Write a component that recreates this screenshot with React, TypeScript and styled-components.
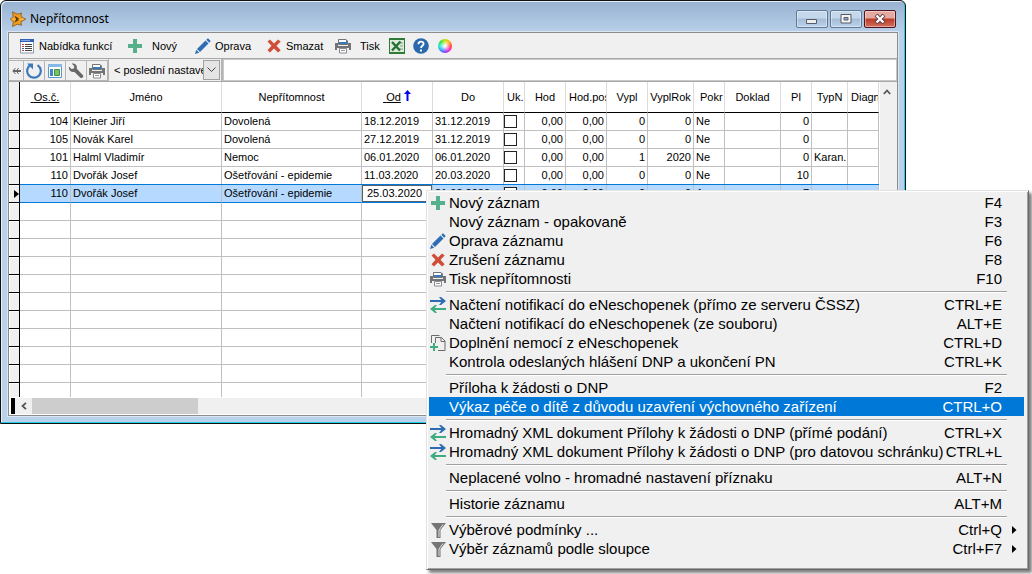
import React from "react";
import styled, { createGlobalStyle, css } from "styled-components";

const GlobalStyle = createGlobalStyle`
  * { box-sizing: border-box; }
  html, body { margin: 0; background: #fff; overflow: hidden; }
  button, input, select { font: inherit; color: inherit; border-radius: 0; margin: 0; }
`;

const Desktop = styled.main`
  position: relative;
  min-height: 100vh;
  color: #000;
`;

const Window = styled.section`
  position: absolute;
  top: 0;
  left: 0;
  right: 126px;
  padding: 0 7px 7px 7px;
  border: 1px solid #111;
  border-radius: 6px 6px 0 0;
  background: linear-gradient(#97b1d0, #b9d1ea 32px);
  box-shadow: inset -1px -1px 0 #1fd0ea, inset 1px 1px 0 #e3eefa;
  font: 11px/16px "Liberation Sans", sans-serif;
`;

const TitleBar = styled.header`
  display: flex;
  align-items: center;
  height: 31px;
  padding: 5px 2px 0 2px;
`;

const Title = styled.h1`
  flex: 1;
  margin: 0 0 0 4px;
  font: 12px/16px "Noto Sans", "Open Sans", sans-serif;
`;

const WindowButtons = styled.div`
  display: flex;
  gap: 2px;
`;

const WindowButton = styled.button<{ $close?: boolean }>`
  display: grid;
  place-items: center;
  width: 32px;
  height: 18px;
  padding: 0;
  border: 1px solid ${(p) => (p.$close ? "#4a1420" : "#5f7894")};
  border-radius: 2px;
  background: ${(p) =>
    p.$close
      ? "linear-gradient(#e6a99f 0 7px, #bb3a26 8px, #d2705c)"
      : "linear-gradient(#c4d7eb 0 7px, #a5bdd7 8px, #bcd2ea)"};
  box-shadow: inset 0 0 0 1px rgba(255, 255, 255, 0.4);
`;

const Frame = styled.div`
  border: 1px solid #8c8c8c;
  box-shadow: 0 0 0 1px #dbe6f2;
  background: #fff;
`;

const Toolbar = styled.div`
  display: flex;
  align-items: center;
  height: 25px;
  padding-left: 10px;
  background: #f0f0f0;
`;

const ToolButton = styled.button<{ $width: number; $gap?: number }>`
  display: flex;
  align-items: center;
  gap: ${(p) => p.$gap ?? 4}px;
  width: ${(p) => p.$width}px;
  padding: 0;
  border: 0;
  background: none;
  white-space: nowrap;
`;

const FilterBar = styled.div`
  display: flex;
  align-items: stretch;
  height: 24px;
  border-top: 1px solid #a8a8a8;
  border-bottom: 1px solid #a8a8a8;
  background: #f0f0f0;
`;

const SquareButton = styled.button<{ $slim?: boolean }>`
  display: grid;
  place-items: center;
  width: ${(p) => (p.$slim ? 15 : 21)}px;
  margin-top: 1px;
  padding: 0;
  border: solid #b4b4b4;
  border-width: 1px 1px 1px 0;
  background: #f0f0f0;
`;

const Combo = styled.div`
  position: relative;
  width: 115px;
  border: solid #b4b4b4;
  border-width: 0 2px 0 1px;
`;

const ComboSelect = styled.select`
  appearance: none;
  width: 100%;
  height: 100%;
  padding: 0 18px 0 5px;
  border: 0;
  background: #f0f0f0;
`;

const ComboArrow = styled.span`
  position: absolute;
  top: 1px;
  right: 1px;
  bottom: 1px;
  display: grid;
  place-items: center;
  width: 17px;
  border: 1px solid #a0a0a0;
  background: #e4e4e4;
  pointer-events: none;
`;

const FilterInput = styled.input`
  flex: 1;
  min-width: 0;
  border: 1px solid #c8c8c8;
  background: #fff;
  outline: 0;
`;

const GridArea = styled.div`
  display: flex;
`;

const Table = styled.table`
  flex: 1;
  width: 0;
  table-layout: fixed;
  border-collapse: separate;
  border-spacing: 0;
`;

const HeadCell = styled.th<{ $left?: number; $dark?: boolean }>`
  height: 31px;
  padding: 0 0 0 ${(p) => p.$left ?? 0}px;
  border-right: 1px solid ${(p) => (p.$dark ? "#000" : "#dcdcdc")};
  border-bottom: 1px solid #000;
  background: ${(p) => (p.$dark ? "#f0f0f0" : "#fff")};
  font-weight: 400;
  text-align: ${(p) => (p.$left ? "left" : "center")};
  white-space: nowrap;
  overflow: hidden;
`;

const SortKey = styled.span`
  text-decoration: underline;
  white-space: pre;
`;

const Cell = styled.td<{ $right?: boolean }>`
  height: 18px;
  padding: 0 2px;
  border-right: 1px solid #c0c0c0;
  border-bottom: 1px solid #c0c0c0;
  line-height: 17px;
  text-align: ${(p) => (p.$right ? "right" : "left")};
  white-space: nowrap;
  overflow: hidden;
`;

const Marker = styled.td`
  height: 18px;
  padding: 0;
  border-right: 1px solid #000;
  border-bottom: 1px solid #000;
  background: #f0f0f0;
  box-shadow: inset 1px 1px 0 #fff;
  line-height: 0;
  text-align: right;
`;

const Row = styled.tr<{ $selected?: boolean; $last?: boolean }>`
  ${(p) =>
    p.$selected &&
    css`
      ${Cell} {
        background: #b5d9ff;
        border-bottom-color: #0078d7;
        box-shadow: 0 -1px 0 #0078d7;
      }
    `}
  ${(p) =>
    p.$last &&
    css`
      ${Cell}, ${Marker} {
        height: 14px;
        border-bottom: 0;
      }
    `}
`;

const CheckBox = styled.input`
  appearance: none;
  display: block;
  width: 13px;
  height: 13px;
  margin-left: -2px;
  border: 1px solid #222;
  background: #fff;
`;

const EditBox = styled.input`
  display: block;
  width: 70px;
  height: 17px;
  margin: 0 -2px;
  padding: 0 0 0 4px;
  border: 1px solid #55606c;
  outline: 1px solid #0078d7;
  background: #fff;
`;

const VerticalBar = styled.div`
  display: flex;
  justify-content: center;
  width: 18px;
  padding: 7px 3px 0 0;
  border-left: 1px solid #fff;
  background: #f0f0f0;
`;

const HorizontalBar = styled.div`
  display: flex;
  align-items: stretch;
  height: 18px;
  padding: 1px 1px 1px 2px;
  background: #fff;
`;

const Block = styled.div`
  width: 4px;
  background: #000;
`;

const Track = styled.div`
  display: flex;
  flex: 1;
  background: #f0f0f0;
`;

const TrackButton = styled.button`
  display: grid;
  place-items: center;
  width: 17px;
  padding: 0;
  border: 0;
  background: none;
`;

const Thumb = styled.div`
  width: 166px;
  background: #cdcdcd;
`;

const Menu = styled.div`
  position: absolute;
  top: 190px;
  left: 426px;
  right: 3px;
  padding: 2px 4px 11px 2px;
  border: 1px solid;
  border-color: #e3e3e3 #696969 #696969 #e3e3e3;
  background: #f0f0f0;
  box-shadow: inset 1px 1px 0 #fff, inset -1px -1px 0 #a0a0a0, 3px 3px 3px rgba(0, 0, 0, 0.5);
  font: 15px/19px "Liberation Sans", sans-serif;
`;

const MenuItem = styled.button<{ $active?: boolean }>`
  display: grid;
  grid-template-columns: 16px 1fr auto 22px;
  align-items: center;
  width: 100%;
  height: 19px;
  padding: 0 0 0 1px;
  border: 0;
  background: ${(p) => (p.$active ? "#0078d7" : "transparent")};
  color: ${(p) => (p.$active ? "#fff" : "#000")};
  text-align: left;
  white-space: nowrap;

  svg { display: block; }
`;

const MenuLabel = styled.span`
  padding-left: 3px;
`;

const Arrow = styled.svg`
  margin-left: 10px;
`;

const Separator = styled.hr`
  height: 2px;
  margin: 3px 17px 2px;
  border: 0;
  border-top: 1px solid #a0a0a0;
  background: #fff;
`;

const Icon = ({ children, size = 16 }: { children: React.ReactNode; size?: number }) => (
  <svg width={size} height={size} viewBox="0 0 16 16" aria-hidden="true">
    {children}
  </svg>
);

const LogoIcon = () => (
  <Icon>
    <path d="M2.500 .8l4.800 2.400L11.500 2l-.6 3.400 4.800 2.800-4.800 2.600.6 3.500-4.200-1.100-4.800 2.300.8-5L.3 8.200l3-2.400z" fill="#f59c1a" stroke="#7a4a12" strokeWidth="0.700" />
    <path d="M4.500 4.500l5.500 3.700-5.500 3.600 1.500-3.600z" fill="#5a3a18" />
    <path d="M1.500 8.200h4M8.500 8.200h5.500" stroke="#ffc94d" />
  </Icon>
);

const ListIcon = () => (
  <Icon>
    <path d="M1.500 1.500h13v13.500h-13z" fill="#fff" stroke="#8a97ad" />
    <path d="M1 1h14v3H1z" fill="#2f62b5" />
    <path d="M2 2.500h9" stroke="#7fa6e0" />
    <path d="M3 6.500h2M3 8.500h2M3 12.500h2" stroke="#d0392e" />
    <path d="M3 10.500h2" stroke="#2f62b5" />
    <path d="M6 6.500h7M6 8.500h7M6 10.500h7M6 12.500h7" stroke="#444" />
  </Icon>
);

const PlusIcon = () => (
  <Icon>
    <path d="M6 1h4v5h5v4h-5v5H6v-5H1V6h5z" fill="#55b08b" />
  </Icon>
);

const PencilIcon = () => (
  <Icon>
    <path d="M2 11l8.500-8.500 3 3L5 14z" fill="#2c6db3" />
    <path d="M11.300 1.800L13 .3l2.700 2.700-1.500 1.700z" fill="#2c6db3" />
    <path d="M1.300 11.800l2.900 2.900L0 16z" fill="#2c6db3" />
  </Icon>
);

const CrossIcon = () => (
  <Icon>
    <path d="M1.500 3.500l2.500-2 4 4 4-4 2.700 2-4.200 4.300 4.200 4.500-2.700 2.200-4-4-4 4-2.500-2.200 4-4.500z" fill="#d04e37" />
  </Icon>
);

const PrinterIcon = () => (
  <Icon>
    <path d="M0 5h3v3h10V5h3v7h-2v-2H2v2H0z" fill="#747474" />
    <path d="M3.500 6.500V1.500h7.500l1.500 1.500v3.500z" fill="#3a78b8" stroke="#747474" />
    <path d="M4 2h7v2H4z" fill="#fff" />
    <path d="M4.500 10.500h7v4.500h-7z" fill="#fff" stroke="#8a8a8a" />
    <path d="M6 12.500h4" stroke="#8a9ab5" />
  </Icon>
);

const ExcelIcon = () => (
  <Icon>
    <path d="M.5.500h15v15H.5z" fill="#dfe9dc" stroke="#2e7a37" />
    <path d="M0 0h16v2H0zM0 14h16v2H0z" fill="#2e7a37" />
    <path d="M11 5h3M11 8h3M11 11h3" stroke="#7fa684" />
    <path d="M3 4l8 8.500M11.500 3.500L3 12.500" stroke="#237030" strokeWidth="2.400" />
  </Icon>
);

const HelpIcon = () => (
  <Icon>
    <circle cx="8" cy="8" r="7.800" fill="#2968ad" />
    <path d="M5.400 6.300c0-3.700 5.400-3.500 5.200-.4C10.500 7.700 8 7.900 8 10" fill="none" stroke="#fff" strokeWidth="1.800" />
    <path d="M7 11.500h2v2H7z" fill="#fff" />
  </Icon>
);

const ColorWheel = styled.i`
  width: 14px;
  height: 14px;
  margin-left: 1px;
  border-radius: 50%;
  background: radial-gradient(circle, #fff 5%, rgba(255, 255, 255, 0) 60%),
    conic-gradient(#c8e000, #ffb020, #ff4040, #ff20d0, #8040ff, #20a0ff, #20e8d0, #30e040, #c8e000);
`;

const DockIcon = () => (
  <svg width="9" height="8" viewBox="0 0 9 8" aria-hidden="true">
    <path d="M3.500 1L.8 4l2.700 3M6.500 1L4.500 4l2 3M1 3.500h8M1 4.500h8" fill="none" stroke="#666" />
  </svg>
);

const RefreshIcon = () => (
  <Icon>
    <path d="M5 1.800a6.800 6.800 0 1 0 6.500.3" fill="none" stroke="#3c79bb" strokeWidth="2.200" />
    <path d="M1 .5h6v6z" fill="#3c79bb" />
  </Icon>
);

const LayoutIcon = () => (
  <Icon>
    <path d="M1.500 1.500h13v13h-13z" fill="#fff" stroke="#5b95cc" />
    <path d="M1 1h14v3H1z" fill="#86b9e6" />
    <path d="M3 6h3v7H3z" fill="#3e86c8" />
    <path d="M7.500 6.500h5v6h-5z" fill="#7cbf62" stroke="#3f9245" />
  </Icon>
);

const WrenchIcon = () => (
  <Icon>
    <path d="M1 3.500L3.500 6 6 5.500 6.200 3 3.800.700C7 0 9.500 2.300 8.800 5.800l6.200 6.400c1 1.500-1 3.500-2.600 2.600L6.200 8.700C3 9.700.2 7 1 3.500z" fill="#686868" />
  </Icon>
);

const SyncIcon = () => (
  <Icon>
    <path d="M0 4h13" stroke="#2b6cb5" strokeWidth="2" />
    <path d="M9 0h2l5 4-5 4H9l3-4z" fill="#2b6cb5" />
    <path d="M3 12h13" stroke="#3fab80" strokeWidth="2" />
    <path d="M7 8H5l-5 4 5 4h2l-3-4z" fill="#3fab80" />
  </Icon>
);

const PagesIcon = () => (
  <Icon>
    <path d="M1.500 8V.5h8M5.500 8V2.500h6l3.500 3.500v9.500H8" fill="none" stroke="#6c6c6c" />
    <path d="M11 2.500v4h4" fill="none" stroke="#6c6c6c" />
    <path d="M4 8v8M0 12h8" stroke="#3fab80" strokeWidth="2" />
  </Icon>
);

const FunnelIcon = () => (
  <Icon>
    <path d="M1 1h15l-5.500 7v8H6.500V8z" fill="#757575" />
    <path d="M13 2.500L9 8v7" fill="none" stroke="#e4e4e4" />
  </Icon>
);

const columns: { label: string; width?: number; left?: number; right?: boolean }[] = [
  { label: "Os.č.", width: 51, right: true },
  { label: "Jméno", width: 151 },
  { label: "Nepřítomnost", width: 140 },
  { label: "Od", width: 71 },
  { label: "Do", width: 71 },
  { label: "Uk.", width: 21, left: 3 },
  { label: "Hod", width: 41, right: true },
  { label: "Hod.pos", width: 41, left: 3, right: true },
  { label: "Vypl", width: 41, right: true },
  { label: "VyplRok", width: 46, right: true },
  { label: "Pokr", width: 31, left: 6 },
  { label: "Doklad", width: 56 },
  { label: "Pl", width: 31, right: true },
  { label: "TypN", width: 36 },
  { label: "Diagn", left: 3 },
];

const records = [
  ["104", "Kleiner Jiří", "Dovolená", "18.12.2019", "31.12.2019", "", "0,00", "0,00", "0", "0", "Ne", "", "0", "", ""],
  ["105", "Novák Karel", "Dovolená", "27.12.2019", "31.12.2019", "", "0,00", "0,00", "0", "0", "Ne", "", "0", "", ""],
  ["101", "Halml Vladimír", "Nemoc", "06.01.2020", "06.01.2020", "", "0,00", "0,00", "1", "2020", "Ne", "", "0", "Karan.", ""],
  ["110", "Dvořák Josef", "Ošetřování - epidemie", "11.03.2020", "20.03.2020", "", "0,00", "0,00", "0", "0", "Ne", "", "10", "", ""],
  ["110", "Dvořák Josef", "Ošetřování - epidemie", "25.03.2020", "31.03.2020", "", "0,00", "0,00", "0", "0", "Ano", "", "7", "", ""],
];
const selected = 4;
const emptyRows = 11;

type Entry = { label: string; keys: string; icon?: React.ReactNode; active?: boolean; sub?: boolean };

const menuGroups: Entry[][] = [
  [
    { label: "Nový záznam", keys: "F4", icon: <PlusIcon /> },
    { label: "Nový záznam - opakovaně", keys: "F3" },
    { label: "Oprava záznamu", keys: "F6", icon: <PencilIcon /> },
    { label: "Zrušení záznamu", keys: "F8", icon: <CrossIcon /> },
    { label: "Tisk nepřítomnosti", keys: "F10", icon: <PrinterIcon /> },
  ],
  [
    { label: "Načtení notifikací do eNeschopenek (přímo ze serveru ČSSZ)", keys: "CTRL+E", icon: <SyncIcon /> },
    { label: "Načtení notifikací do eNeschopenek (ze souboru)", keys: "ALT+E" },
    { label: "Doplnění nemocí z eNeschopenek", keys: "CTRL+D", icon: <PagesIcon /> },
    { label: "Kontrola odeslaných hlášení DNP a ukončení PN", keys: "CTRL+K" },
  ],
  [
    { label: "Příloha k žádosti o DNP", keys: "F2" },
    { label: "Výkaz péče o dítě z důvodu uzavření výchovného zařízení", keys: "CTRL+O", active: true },
  ],
  [
    { label: "Hromadný XML dokument Přílohy k žádosti o DNP (přímé podání)", keys: "CTRL+X", icon: <SyncIcon /> },
    { label: "Hromadný XML dokument Přílohy k žádosti o DNP (pro datovou schránku)", keys: "CTRL+L", icon: <SyncIcon /> },
  ],
  [{ label: "Neplacené volno - hromadné nastavení příznaku", keys: "ALT+N" }],
  [{ label: "Historie záznamu", keys: "ALT+M" }],
  [
    { label: "Výběrové podmínky ...", keys: "Ctrl+Q", icon: <FunnelIcon />, sub: true },
    { label: "Výběr záznamů podle sloupce", keys: "Ctrl+F7", icon: <FunnelIcon />, sub: true },
  ],
];

function HeaderLabel({ label }: { label: string }) {
  if (label === "Os.č.") return <SortKey>{"\u00a0"}{label}</SortKey>;
  if (label === "Od")
    return (
      <>
        <SortKey>{"\u00a0"}{label}</SortKey>{" "}
        <svg width="7" height="11" viewBox="0 0 7 11" aria-hidden="true">
          <path d="M0 4L3.500 0 7 4H4.500v7h-2V4z" fill="#0000f0" />
        </svg>
      </>
    );
  return <>{label}</>;
}

function RecordCell({ row, col }: { row: number; col: number }) {
  const value = records[row][col];
  const name = columns[col].label;
  let content: React.ReactNode = value;
  if (name === "Uk.") content = <CheckBox type="checkbox" aria-label={name} />;
  if (name === "Od" && row === selected) content = <EditBox defaultValue={value} aria-label={name} />;
  return <Cell $right={columns[col].right}>{content}</Cell>;
}

function AbsenceTable() {
  return (
    <Table>
      <colgroup>
        <col style={{ width: 11 }} />
        {columns.map((c) => (
          <col key={c.label} style={{ width: c.width }} />
        ))}
      </colgroup>
      <thead>
        <tr>
          <HeadCell $dark />
          {columns.map((c) => (
            <HeadCell key={c.label} $left={c.left}>
              <HeaderLabel label={c.label} />
            </HeadCell>
          ))}
        </tr>
      </thead>
      <tbody>
        {records.map((_, r) => (
          <Row key={r} $selected={r === selected}>
            <Marker>
              {r === selected && (
                <svg width="5" height="8" viewBox="0 0 5 8" aria-hidden="true">
                  <path d="M0 0l5 4-5 4z" />
                </svg>
              )}
            </Marker>
            {columns.map((c, i) => (
              <RecordCell key={c.label} row={r} col={i} />
            ))}
          </Row>
        ))}
        {Array.from({ length: emptyRows }, (_, r) => (
          <Row key={r} $last={r === emptyRows - 1}>
            <Marker />
            {columns.map((c) => (
              <Cell key={c.label} />
            ))}
          </Row>
        ))}
      </tbody>
    </Table>
  );
}

export default function App() {
  return (
    <Desktop>
      <GlobalStyle />
      <Window aria-label="Nepřítomnost">
        <TitleBar>
          <LogoIcon />
          <Title>Nepřítomnost</Title>
          <WindowButtons>
            <WindowButton aria-label="Minimalizovat">
              <svg width="12" height="10" viewBox="0 0 12 10">
                <path d="M.5 5.500h10v4H.5z" fill="#eee" stroke="#555c66" />
              </svg>
            </WindowButton>
            <WindowButton aria-label="Maximalizovat">
              <svg width="12" height="10" viewBox="0 0 12 10">
                <path d="M1 .5h10v8.500H1z" fill="#f4f4f4" stroke="#555c66" />
                <path d="M4 3.500h4v2.500H4z" fill="#8fb0d6" stroke="#555c66" />
              </svg>
            </WindowButton>
            <WindowButton $close aria-label="Zavřít">
              <svg width="12" height="10" viewBox="0 0 12 10">
                <path d="M2 1l8 8M10 1L2 9" stroke="#5b3a42" strokeWidth="4" />
                <path d="M2.500 1.500l7 7M9.500 1.500l-7 7" stroke="#fff" strokeWidth="2.400" />
              </svg>
            </WindowButton>
          </WindowButtons>
        </TitleBar>
        <Frame>
          <Toolbar>
            <ToolButton $width={108}><ListIcon />Nabídka funkcí</ToolButton>
            <ToolButton $width={68} $gap={9}><PlusIcon />Nový</ToolButton>
            <ToolButton $width={71}><PencilIcon />Oprava</ToolButton>
            <ToolButton $width={69}><CrossIcon />Smazat</ToolButton>
            <ToolButton $width={54} $gap={9}><PrinterIcon />Tisk</ToolButton>
            <ToolButton $width={24} aria-label="Excel"><ExcelIcon /></ToolButton>
            <ToolButton $width={24} aria-label="Nápověda"><HelpIcon /></ToolButton>
            <ToolButton $width={24} aria-label="Barvy"><ColorWheel /></ToolButton>
          </Toolbar>
          <FilterBar>
            <SquareButton $slim aria-label="Ukotvit"><DockIcon /></SquareButton>
            <SquareButton aria-label="Obnovit"><RefreshIcon /></SquareButton>
            <SquareButton aria-label="Rozložení"><LayoutIcon /></SquareButton>
            <SquareButton aria-label="Nastavení"><WrenchIcon /></SquareButton>
            <SquareButton aria-label="Tisk"><PrinterIcon /></SquareButton>
            <Combo>
              <ComboSelect aria-label="Nastavení sloupců">
                <option>&lt; poslední nastavení &gt;</option>
              </ComboSelect>
              <ComboArrow>
                <svg width="9" height="6" viewBox="0 0 9 6">
                  <path d="M.5.500l4 4 4-4" fill="none" stroke="#444" />
                </svg>
              </ComboArrow>
            </Combo>
            <FilterInput aria-label="Hledat" />
          </FilterBar>
          <GridArea>
            <AbsenceTable />
            <VerticalBar>
              <svg width="8" height="6" viewBox="0 0 8 6">
                <path d="M.8 5L4 1.500 7.200 5" fill="none" stroke="#555" strokeWidth="1.800" />
              </svg>
            </VerticalBar>
          </GridArea>
          <HorizontalBar>
            <Block />
            <Track>
              <TrackButton aria-label="Vlevo">
                <svg width="6" height="8" viewBox="0 0 6 8">
                  <path d="M5 .8L1.500 4 5 7.200" fill="none" stroke="#555" strokeWidth="1.800" />
                </svg>
              </TrackButton>
              <Thumb />
            </Track>
          </HorizontalBar>
        </Frame>
      </Window>
      <Menu role="menu">
        {menuGroups.map((group, g) => (
          <React.Fragment key={g}>
            {g > 0 && <Separator />}
            {group.map((item) => (
              <MenuItem key={item.label} role="menuitem" $active={item.active}>
                <span>{item.icon}</span>
                <MenuLabel>{item.label}</MenuLabel>
                <span>{item.keys}</span>
                {item.sub && (
                  <Arrow width="5" height="8" viewBox="0 0 5 8" aria-hidden="true">
                    <path d="M0 0l4.500 4L0 8z" />
                  </Arrow>
                )}
              </MenuItem>
            ))}
          </React.Fragment>
        ))}
      </Menu>
    </Desktop>
  );
}
